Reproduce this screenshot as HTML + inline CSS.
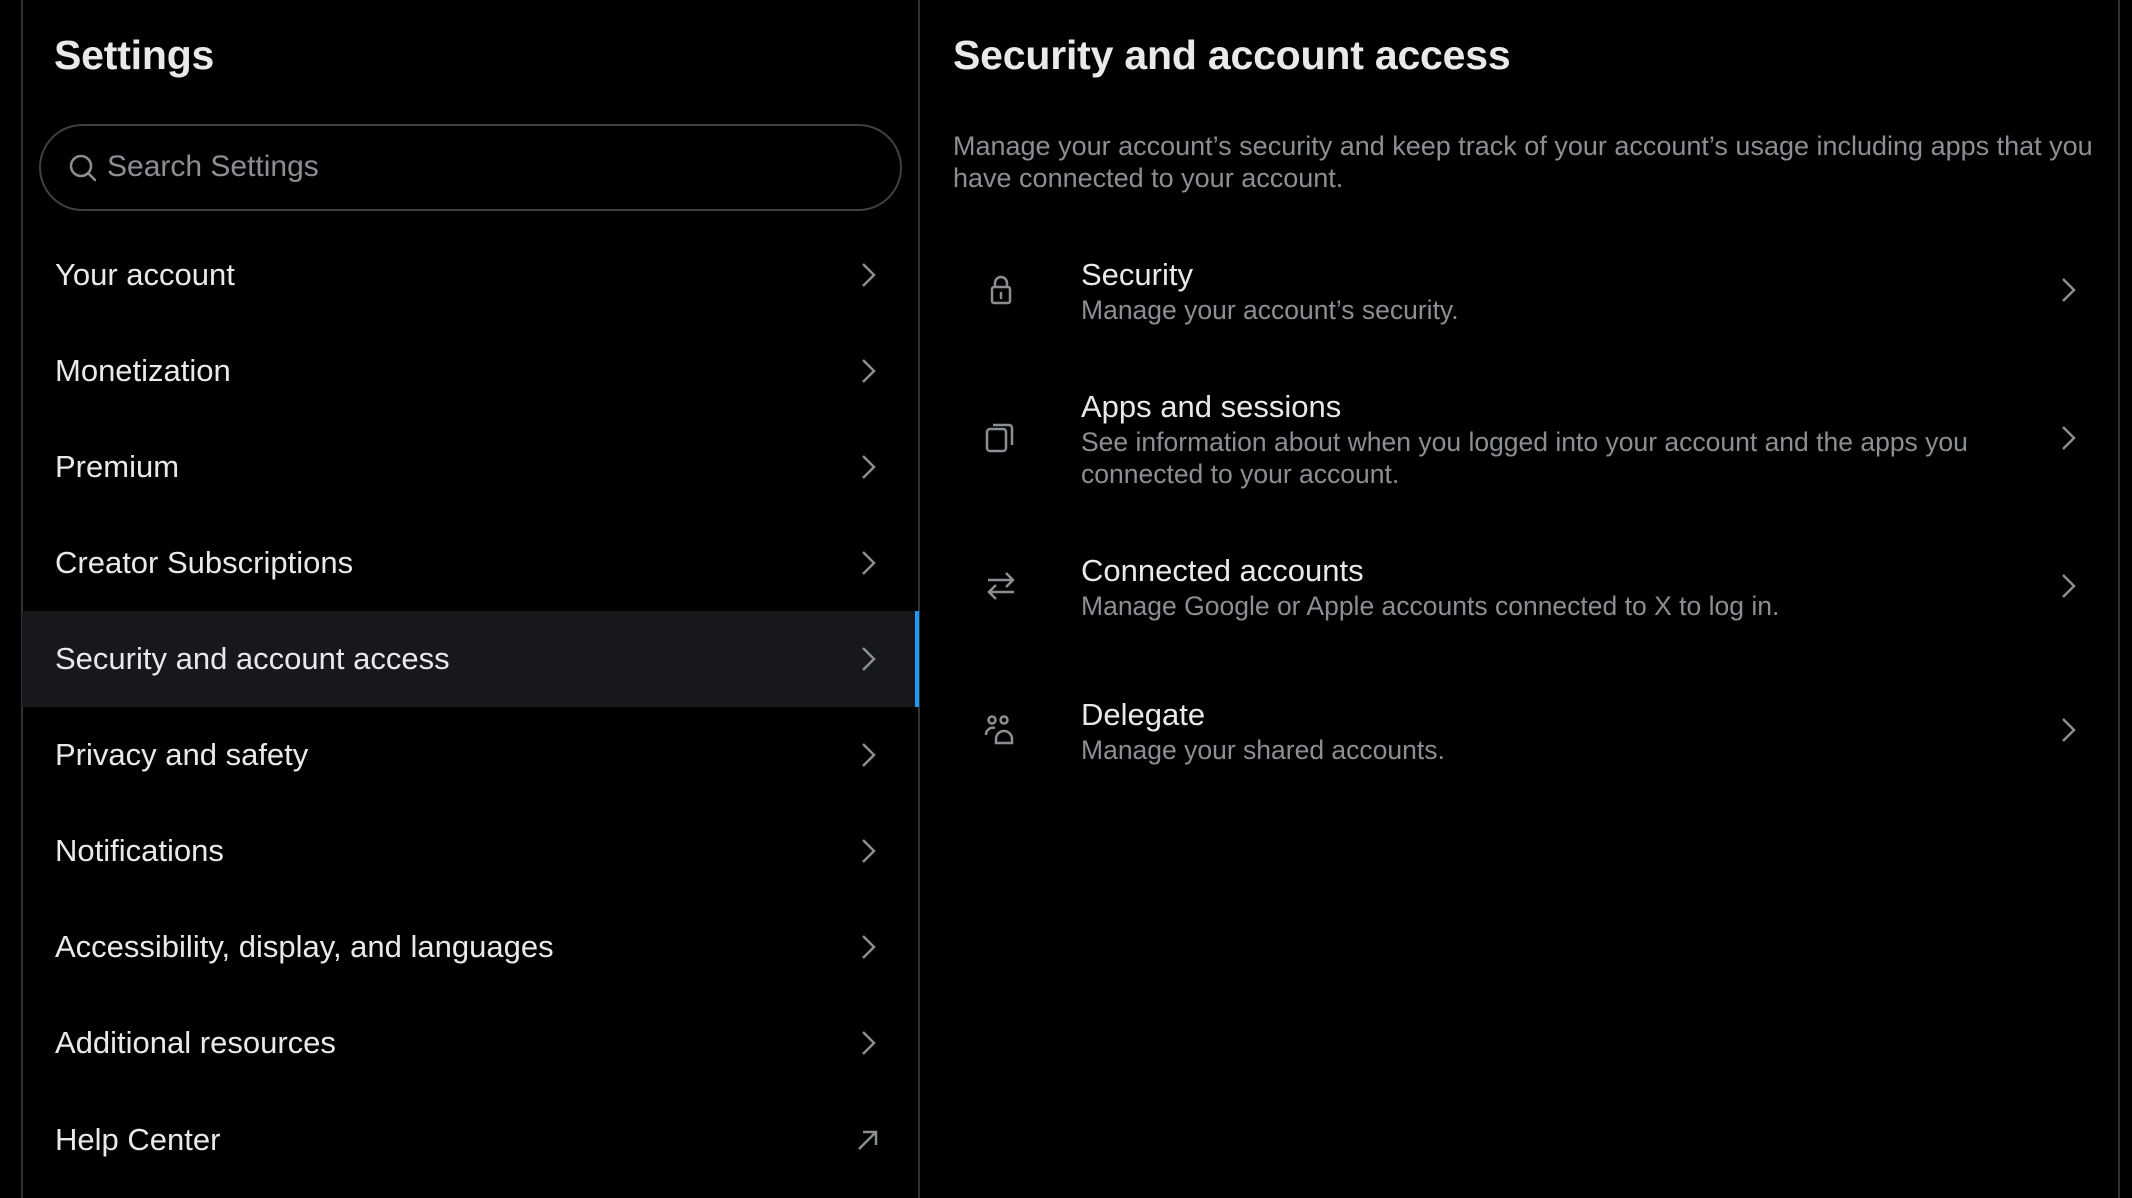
<!DOCTYPE html>
<html><head><meta charset="utf-8"><style>
*{margin:0;padding:0;box-sizing:border-box}
body{width:2132px;height:1198px;background:#000;font-family:"Liberation Sans",sans-serif;color:#e7e9ea;position:relative;overflow:hidden}
.abs{position:absolute}
.vl{position:absolute;top:0;width:2px;height:1198px;background:#2f3336}
h1{position:absolute;font-size:41px;font-weight:bold;line-height:1;letter-spacing:-0.2px}
.search{position:absolute;left:39px;top:124px;width:863px;height:87px;border:2px solid #3e4144;border-radius:44px}
.search span{position:absolute;left:66px;top:24px;font-size:30px;color:#8b8f94}
.row{position:absolute;left:22px;width:897px;height:96px}
.row .t{position:absolute;left:33px;top:31px;font-size:31px;line-height:34px}
.row svg{position:absolute;left:832px;top:34px}
.sel{background:#16181c}
.sel::after{content:"";position:absolute;right:0;top:0;width:4px;height:96px;background:#1d9bf0}
.desc{position:absolute;left:953px;top:130px;font-size:27px;line-height:32px;color:#8b8f94;width:1150px}
.it .h{position:absolute;left:1081px;font-size:31px;line-height:34px}
.it .s{position:absolute;left:1081px;font-size:26.5px;line-height:32px;color:#8b8f94}
.chev{position:absolute;left:2054px}
.ic{position:absolute;left:983px}
</style></head><body>
<div class="vl" style="left:21px"></div>
<div class="vl" style="left:918px"></div>
<div class="vl" style="left:2118px"></div>
<h1 style="left:54px;top:35px">Settings</h1>
<div class="search"><svg class="abs" style="left:26px;top:26px" width="32" height="32" viewBox="0 0 32 32"><circle cx="14" cy="14" r="10" fill="none" stroke="#8b8f94" stroke-width="2.5"/><line x1="21" y1="21" x2="28" y2="28" stroke="#8b8f94" stroke-width="2.5" stroke-linecap="round"/></svg><span>Search Settings</span></div>

<div class="row" style="top:227px"><div class="t">Your account</div><svg width="28" height="28" viewBox="0 0 28 28"><path d="M9 3l11 11-11 11" fill="none" stroke="#8b8f94" stroke-width="2.5"/></svg></div>
<div class="row" style="top:323px"><div class="t">Monetization</div><svg width="28" height="28" viewBox="0 0 28 28"><path d="M9 3l11 11-11 11" fill="none" stroke="#8b8f94" stroke-width="2.5"/></svg></div>
<div class="row" style="top:419px"><div class="t">Premium</div><svg width="28" height="28" viewBox="0 0 28 28"><path d="M9 3l11 11-11 11" fill="none" stroke="#8b8f94" stroke-width="2.5"/></svg></div>
<div class="row" style="top:515px"><div class="t">Creator Subscriptions</div><svg width="28" height="28" viewBox="0 0 28 28"><path d="M9 3l11 11-11 11" fill="none" stroke="#8b8f94" stroke-width="2.5"/></svg></div>
<div class="row sel" style="top:611px"><div class="t">Security and account access</div><svg width="28" height="28" viewBox="0 0 28 28"><path d="M9 3l11 11-11 11" fill="none" stroke="#8b8f94" stroke-width="2.5"/></svg></div>
<div class="row" style="top:707px"><div class="t">Privacy and safety</div><svg width="28" height="28" viewBox="0 0 28 28"><path d="M9 3l11 11-11 11" fill="none" stroke="#8b8f94" stroke-width="2.5"/></svg></div>
<div class="row" style="top:803px"><div class="t">Notifications</div><svg width="28" height="28" viewBox="0 0 28 28"><path d="M9 3l11 11-11 11" fill="none" stroke="#8b8f94" stroke-width="2.5"/></svg></div>
<div class="row" style="top:899px"><div class="t">Accessibility, display, and languages</div><svg width="28" height="28" viewBox="0 0 28 28"><path d="M9 3l11 11-11 11" fill="none" stroke="#8b8f94" stroke-width="2.5"/></svg></div>
<div class="row" style="top:995px"><div class="t">Additional resources</div><svg width="28" height="28" viewBox="0 0 28 28"><path d="M9 3l11 11-11 11" fill="none" stroke="#8b8f94" stroke-width="2.5"/></svg></div>
<div class="row" style="top:1092px"><div class="t">Help Center</div><svg width="28" height="28" viewBox="0 0 28 28"><path d="M5 23L22 6M9 6h13v13" fill="none" stroke="#8b8f94" stroke-width="2.5"/></svg></div>

<h1 style="left:953px;top:35px">Security and account access</h1>
<div class="desc">Manage your account’s security and keep track of your account’s usage including apps that you have connected to your account.</div>

<div class="it">
<svg class="ic" style="top:272px" width="36" height="36" viewBox="0 0 36 36" fill="none" stroke="#8b8f94" stroke-width="2.5"><rect x="9" y="15" width="18" height="16" rx="2"/><path d="M12 15v-4a6 6 0 0 1 12 0v4"/><path d="M18 21v5" stroke-linecap="round"/></svg>
<div class="h" style="top:258px">Security</div><div class="s" style="top:294px">Manage your account’s security.</div>
<svg class="chev" style="top:276px" width="28" height="28" viewBox="0 0 28 28"><path d="M9 3l11 11-11 11" fill="none" stroke="#8b8f94" stroke-width="2.5"/></svg>

<svg class="ic" style="top:420px" width="36" height="36" viewBox="0 0 36 36" fill="none" stroke="#8b8f94" stroke-width="2.5"><rect x="4" y="9" width="19" height="22" rx="3"/><path d="M10 5h16a3 3 0 0 1 3 3v17"/></svg>
<div class="h" style="top:390px">Apps and sessions</div><div class="s" style="top:426px">See information about when you logged into your account and the apps you<br>connected to your account.</div>
<svg class="chev" style="top:424px" width="28" height="28" viewBox="0 0 28 28"><path d="M9 3l11 11-11 11" fill="none" stroke="#8b8f94" stroke-width="2.5"/></svg>

<svg class="ic" style="top:568px" width="36" height="36" viewBox="0 0 36 36" fill="none" stroke="#8b8f94" stroke-width="2.5"><path d="M5 12h25M23 5l7 7-7 7M31 24H6M13 17l-7 7 7 7"/></svg>
<div class="h" style="top:554px">Connected accounts</div><div class="s" style="top:590px">Manage Google or Apple accounts connected to X to log in.</div>
<svg class="chev" style="top:572px" width="28" height="28" viewBox="0 0 28 28"><path d="M9 3l11 11-11 11" fill="none" stroke="#8b8f94" stroke-width="2.5"/></svg>

<svg class="ic" style="top:712px" width="36" height="36" viewBox="0 0 36 36" fill="none" stroke="#8b8f94" stroke-width="2.5"><circle cx="9" cy="8" r="3.5"/><circle cx="21" cy="8" r="3.5"/><path d="M3 23a7 7 0 0 1 9-7"/><path d="M13 31v-4a8 8 0 0 1 16 0v4z"/></svg>
<div class="h" style="top:698px">Delegate</div><div class="s" style="top:734px">Manage your shared accounts.</div>
<svg class="chev" style="top:716px" width="28" height="28" viewBox="0 0 28 28"><path d="M9 3l11 11-11 11" fill="none" stroke="#8b8f94" stroke-width="2.5"/></svg>
</div>
</body></html>
